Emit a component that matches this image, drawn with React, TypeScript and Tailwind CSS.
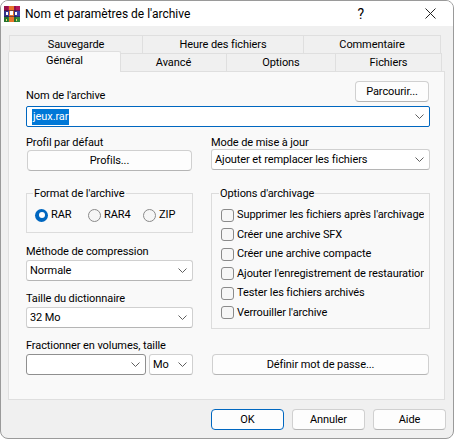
const Chevron = () => (
  <svg width="9" height="5" viewBox="0 0 9 5" className="shrink-0" fill="none" stroke="#5f5f5f" strokeWidth="1">
    <path d="M0.5 0.5 L4.5 4.5 L8.5 0.5" />
  </svg>
);

const RarIcon = () => (
  <svg width="16" height="16" viewBox="0 0 16 16" className="shrink-0">
    <rect x="0" y="0" width="16" height="5" fill="#b5185a" />
    <rect x="0" y="5" width="16" height="6" fill="#3d3fa8" />
    <rect x="0" y="11" width="16" height="5" fill="#2f8a3a" />
    <rect x="0" y="0" width="4" height="16" fill="#000" fillOpacity="0.18" />
    <rect x="10" y="0" width="2" height="16" fill="#000" fillOpacity="0.2" />
    <rect x="5" y="0" width="5" height="16" fill="#e8742a" />
    <rect x="6" y="5" width="3" height="4" fill="#fff" />
    <rect x="2" y="6" width="2" height="3" fill="#fff" />
    <rect x="11" y="6" width="2" height="3" fill="#fff" />
    <rect x="2" y="13" width="1" height="2" fill="#e8e060" />
    <rect x="12" y="13" width="1" height="2" fill="#e8e060" />
    <rect x="0" y="4" width="16" height="1" fill="#1a1a40" fillOpacity="0.5" />
    <rect x="0" y="10" width="16" height="1" fill="#1a1a40" fillOpacity="0.5" />
  </svg>
);

const Btn = ({ children, className = "" }: { children: string; className?: string }) => (
  <button className={`h-[21px] flex items-center justify-center pt-px rounded-[4px] border border-[#d0d0d0] border-b-[#b5b5b5] bg-[#fdfdfd] text-black ${className}`}>
    {children}
  </button>
);

const Select = ({ children, className = "", dark = false }: { children?: string; className?: string; dark?: boolean }) => (
  <div className={`h-[21px] flex items-center justify-between rounded-[3px] border bg-white pl-[3px] pr-[5px] text-black ${dark ? "border-[#8f8f8f]" : "border-[#d0d0d0] border-b-[#b5b5b5]"} ${className}`}>
    <span className="whitespace-nowrap pt-[2px]">{children}</span>
    <Chevron />
  </div>
);

const Label = ({ children, className = "" }: { children: string; className?: string }) => (
  <div className={`h-[16px] leading-[16px] pt-px whitespace-nowrap text-black ${className}`}>{children}</div>
);

const Radio = ({ on = false, label, className = "" }: { on?: boolean; label: string; className?: string }) => (
  <div className={`flex items-center gap-[3px] ${className}`}>
    {on ? (
      <span className="w-[13px] h-[13px] rounded-full bg-[#0067c0] flex items-center justify-center">
        <span className="w-[6px] h-[6px] rounded-full bg-white" />
      </span>
    ) : (
      <span className="w-[13px] h-[13px] rounded-full border border-[#8a8a8a] bg-[#f6f6f6]" />
    )}
    <span className="pt-px">{label}</span>
  </div>
);

const Check = ({ label, className = "" }: { label: string; className?: string }) => (
  <div className={`h-[16px] flex items-center gap-[3px] ${className}`}>
    <span className="w-[13px] h-[13px] shrink-0 rounded-[3px] border border-[#8a8a8a] bg-[#f6f6f6]" />
    <span className="whitespace-nowrap pt-px">{label}</span>
  </div>
);

const Tab = ({ children, className = "" }: { children: string; className?: string }) => (
  <div className={`flex items-center justify-center pt-[2px] border-t border-l border-r border-[#dfdfdf] bg-[#f0f0f0] text-black ${className}`}>
    {children}
  </div>
);

export default function App() {
  return (
    <div className="w-[454px] h-[439px] bg-white">
      <div
        className="w-full h-full flex flex-col rounded-[8px] border border-[#9a9a9a] bg-[#f0f0f0] overflow-hidden text-[11px] tracking-[-0.09px] text-black font-[Roboto,sans-serif]"
      >
        {/* title bar */}
        <div className="h-[25px] shrink-0 bg-white flex items-center pl-[3px]">
          <RarIcon />
          <span className="ml-[5px] text-black text-[12px] tracking-normal">Nom et paramètres de l'archive</span>
          <span className="ml-auto mr-[61px] text-[14px] leading-none text-black">?</span>
          <svg width="11" height="11" viewBox="0 0 11 11" className="mr-[17px]" fill="none" stroke="#222" strokeWidth="1">
            <path d="M0.5 0.5 L10.5 10.5 M10.5 0.5 L0.5 10.5" />
          </svg>
        </div>

        {/* tabs */}
        <div className="mt-[9px] ml-[8px] flex h-[18px] shrink-0">
          <Tab className="w-[134px]">Sauvegarde</Tab>
          <Tab className="w-[162px] -ml-px">Heure des fichiers</Tab>
          <Tab className="w-[138px] -ml-px">Commentaire</Tab>
        </div>
        <div className="ml-[7px] flex h-[18px] shrink-0">
          <div className="relative z-10 w-[113px] h-[21px] -mt-[2px] flex items-center justify-center border-t border-l border-r border-[#dfdfdf] bg-[#f9f9f9] rounded-t-[2px] pb-[2px]">
            Général
          </div>
          <Tab className="w-[107px] -ml-px">Avancé</Tab>
          <Tab className="w-[110px] -ml-px">Options</Tab>
          <Tab className="w-[107px] -ml-px">Fichiers</Tab>
        </div>

        {/* panel */}
        <div className="ml-[7px] w-[437px] h-[329px] shrink-0 border border-[#dfdfdf] bg-[#f9f9f9] pl-[17px] pt-[9px]">
          {/* archive name */}
          <div className="flex items-end w-[404px] h-[21px]">
            <Label className="mb-[-1px]">Nom de l'archive</Label>
            <Btn className="ml-auto w-[74px] mr-[1px]">Parcourir...</Btn>
          </div>
          <div className="mt-[4px] w-[404px] h-[21px] flex items-center justify-between rounded-[2px] border border-[#0067c0] bg-white pl-[5px] pr-[5px]">
            <span className="bg-[#0078d7] text-white leading-[16px] px-px">jeux.rar</span>
            <Chevron />
          </div>

          <div className="mt-[7px] flex gap-[18px]">
            {/* left column */}
            <div className="w-[167px] shrink-0">
              <Label>Profil par défaut</Label>
              <Btn className="ml-[1px] w-[165px]">Profils...</Btn>

              <fieldset className="mt-[14px] h-[48px] border border-[#dcdcdc]">
                <legend className="ml-[6px] px-px h-[16px] leading-[16px] pt-px">Format de l'archive</legend>
                <div className="flex pl-[8px] mt-[6px] h-[16px]">
                  <Radio on label="RAR" className="w-[53px]" />
                  <Radio label="RAR4" className="w-[55px]" />
                  <Radio label="ZIP" />
                </div>
              </fieldset>

              <Label className="mt-[10px]">Méthode de compression</Label>
              <Select className="mt-[1px]">Normale</Select>

              <Label className="mt-[9px]">Taille du dictionnaire</Label>
              <Select className="mt-[1px]">32 Mo</Select>

              <Label className="mt-[9px]">Fractionner en volumes, taille</Label>
              <div className="mt-[1px] flex gap-[3px]">
                <Select dark className="w-[120px]" />
                <Select className="w-[44px]">Mo</Select>
              </div>
            </div>

            {/* right column */}
            <div className="w-[219px] shrink-0">
              <Label>Mode de mise à jour</Label>
              <Select className="-mt-px">Ajouter et remplacer les fichiers</Select>

              <fieldset className="mt-[15px] h-[144px] border border-[#dcdcdc] overflow-hidden">
                <legend className="ml-[7px] px-px h-[16px] leading-[16px] pt-px">Options d'archivage</legend>
                <div className="mt-[6px] ml-[9px] w-[203px] overflow-hidden flex flex-col gap-[3.5px]">
                  <Check label="Supprimer les fichiers après l'archivage" />
                  <Check label="Créer une archive SFX" />
                  <Check label="Créer une archive compacte" />
                  <Check label="Ajouter l'enregistrement de restauration" />
                  <Check label="Tester les fichiers archivés" />
                  <Check label="Verrouiller l'archive" />
                </div>
              </fieldset>

              <Btn className="mt-[25px] ml-px w-[217px]">Définir mot de passe...</Btn>
            </div>
          </div>
        </div>

        {/* footer */}
        <div className="mt-[9px] flex justify-end gap-[8px] pr-[7px]">
          <Btn className="w-[73px] !border-[#0067c0]">OK</Btn>
          <Btn className="w-[73px]">Annuler</Btn>
          <Btn className="w-[73px]">Aide</Btn>
        </div>
      </div>
    </div>
  );
}
